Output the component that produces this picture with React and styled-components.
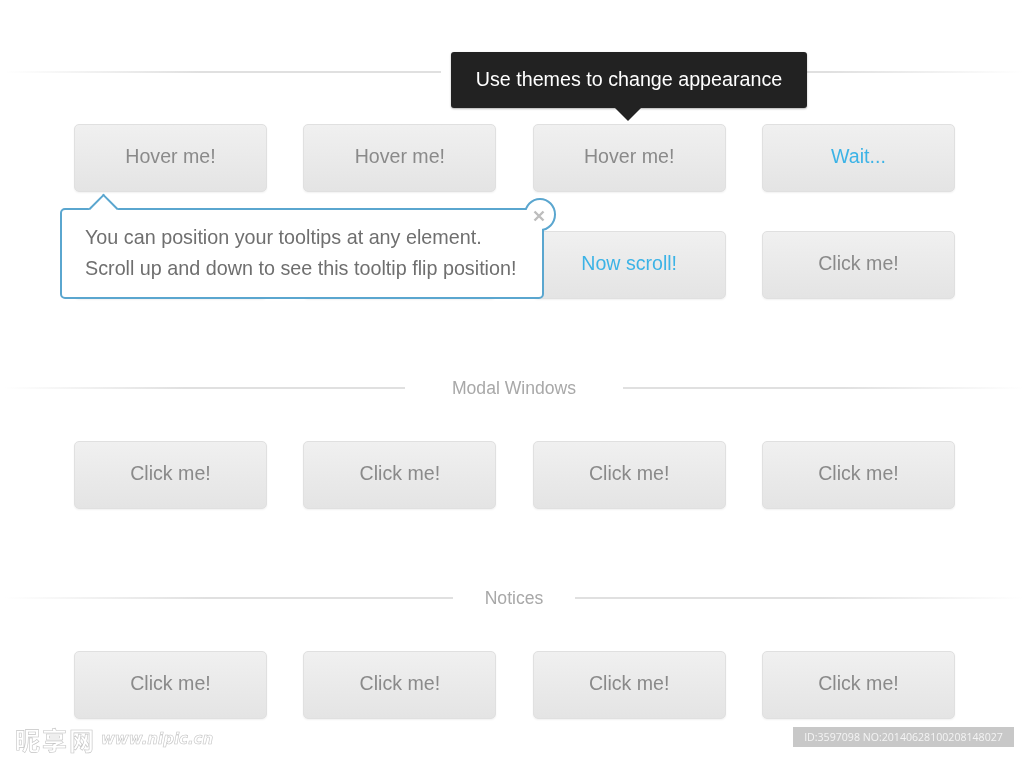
import React from "react";
import styled, { createGlobalStyle } from "styled-components";

const GlobalStyle = createGlobalStyle`
  html, body {
    margin: 0;
    padding: 0;
    background: #fff;
  }
  body {
    font-family: "Liberation Sans", Arial, sans-serif;
  }
`;

const Page = styled.div`
  position: relative;
  width: 1024px;
  height: 757px;
  overflow: hidden;
  background: #fff;
  padding-top: 62px;
  box-sizing: border-box;
  filter: blur(0.35px);
`;

const Section = styled.section`
  margin-bottom: 79px;
`;

const Heading = styled.div`
  display: flex;
  align-items: center;
  justify-content: center;
  height: 20px;
  padding-left: 4px;
  margin-bottom: ${(p) => p.$below}px;
`;

const Line = styled.div`
  flex: 1;
  height: 2px;
  background: linear-gradient(
    ${(p) => (p.$side === "left" ? "to right" : "to left")},
    rgba(216, 216, 216, 0) 0%,
    #e0e0e0 45%,
    #e0e0e0 100%
  );
`;

const Title = styled.h2`
  margin: 0;
  width: ${(p) => p.$width}px;
  text-align: center;
  font-size: 17.6px;
  font-weight: 400;
  color: #a8a8a8;
  line-height: 20px;
`;

const ButtonGrid = styled.div`
  display: grid;
  grid-template-columns: repeat(4, 193px);
  column-gap: 36.33px;
  row-gap: 39px;
  padding-left: 74px;
`;

const DemoButton = styled.button`
  height: 68px;
  box-sizing: border-box;
  border: 1px solid #e0e0e0;
  border-radius: 5px;
  background: linear-gradient(to bottom, #f0f0f0, #e4e4e4);
  box-shadow: 0 1px 2px rgba(0, 0, 0, 0.06);
  font-family: inherit;
  font-size: 19.6px;
  color: ${(p) => (p.$active ? "#3cb3e6" : "#8a8a8a")};
  padding: 0 0 3px;
`;

const DarkTip = styled.div`
  position: absolute;
  left: 451px;
  top: 52px;
  width: 356px;
  height: 56px;
  box-sizing: border-box;
  background: #222;
  border-radius: 3px;
  box-shadow: 0 1px 2px rgba(0, 0, 0, 0.3);
  color: #fff;
  font-size: 19.7px;
  line-height: 55px;
  text-align: center;

  &::after {
    content: "";
    position: absolute;
    left: 164px;
    bottom: -13px;
    border-left: 13px solid transparent;
    border-right: 13px solid transparent;
    border-top: 13px solid #222;
  }
`;

const LightTip = styled.div`
  position: absolute;
  left: 60px;
  top: 208px;
  width: 484px;
  height: 91px;
  box-sizing: border-box;
  background: #fff;
  border: 2px solid #5aa6cf;
  border-radius: 5px;
  padding: 12px 0 0 23px;
  color: #6f6f6f;
  font-size: 19.75px;
  line-height: 31px;
  white-space: nowrap;
`;

const TipArrow = styled.span`
  position: absolute;
  left: 31px;
  top: -12px;
  width: 21px;
  height: 21px;
  background: #fff;
  border-left: 2px solid #5aa6cf;
  border-top: 2px solid #5aa6cf;
  box-sizing: border-box;
  transform: rotate(45deg);
`;

const CloseBadge = styled.span`
  position: absolute;
  right: -14px;
  top: -12px;
  width: 32px;
  height: 33px;
  box-sizing: border-box;
  border-radius: 50%;
  background: #fff;
  border: 2px solid #5aa6cf;
`;

// hides the part of the ring that falls inside the tooltip
const CornerPatch = styled.span`
  position: absolute;
  right: 0;
  top: 0;
  width: 20px;
  height: 22px;
  background: #fff;
`;

const CloseIcon = styled.svg`
  position: absolute;
  right: -3px;
  top: 0;
`;

const Watermark = styled.div`
  position: absolute;
  left: 15px;
  top: 725px;
  display: flex;
  align-items: center;
  gap: 5px;
  color: #fff;
  -webkit-text-stroke: 0.6px #c4c4c4;
  white-space: nowrap;
`;

const WatermarkCn = styled.span`
  font-family: "Noto Sans CJK SC", sans-serif;
  font-weight: 700;
  font-size: 25px;
  line-height: 28px;
  letter-spacing: 2px;
`;

const WatermarkUrl = styled.span`
  font-family: "DejaVu Sans", sans-serif;
  font-style: italic;
  font-weight: 700;
  font-size: 15px;
`;

const IdBadge = styled.div`
  position: absolute;
  left: 793px;
  top: 727px;
  width: 221px;
  height: 20px;
  background: #c8c8c8;
  color: #f4f4f4;
  font-family: "Open Sans", sans-serif;
  font-size: 10.6px;
  line-height: 20px;
  text-align: center;
  white-space: nowrap;
`;

// the two empty ones sit under the blue tooltip
const rowOne = [
  { label: "Hover me!" },
  { label: "Hover me!" },
  { label: "Hover me!" },
  { label: "Wait...", active: true },
  { label: "" },
  { label: "" },
  { label: "Now scroll!", active: true },
  { label: "Click me!" },
];

const clickRow = ["Click me!", "Click me!", "Click me!", "Click me!"];

const App = () => {
  return (
    <Page>
      <GlobalStyle />
      <Section>
        <Heading $below={42}>
          <Line $side="left" />
          <Title $width={146} />
          <Line $side="right" />
        </Heading>
        <ButtonGrid>
          {rowOne.map((el, idx) => (
            <DemoButton key={idx} $active={el.active}>
              {el.label}
            </DemoButton>
          ))}
        </ButtonGrid>
      </Section>

      <Section>
        <Heading $below={43}>
          <Line $side="left" />
          <Title $width={218}>Modal Windows</Title>
          <Line $side="right" />
        </Heading>
        <ButtonGrid>
          {clickRow.map((el, idx) => (
            <DemoButton key={idx}>{el}</DemoButton>
          ))}
        </ButtonGrid>
      </Section>

      <Section>
        <Heading $below={43}>
          <Line $side="left" />
          <Title $width={122}>Notices</Title>
          <Line $side="right" />
        </Heading>
        <ButtonGrid>
          {clickRow.map((el, idx) => (
            <DemoButton key={idx}>{el}</DemoButton>
          ))}
        </ButtonGrid>
      </Section>

      <DarkTip>Use themes to change appearance</DarkTip>

      <LightTip>
        <TipArrow />
        <CloseBadge />
        <CornerPatch />
        <CloseIcon width="12" height="12" viewBox="0 0 12 12">
          <path d="M1.5 1.5 L10.5 10.5 M10.5 1.5 L1.5 10.5" stroke="#bdbdbd" strokeWidth="2.4" />
        </CloseIcon>
        You can position your tooltips at any element.
        <br />
        Scroll up and down to see this tooltip flip position!
      </LightTip>

      <Watermark>
        <WatermarkCn>昵享网</WatermarkCn>
        <WatermarkUrl>www.nipic.cn</WatermarkUrl>
      </Watermark>
      <IdBadge>ID:3597098 NO:20140628100208148027</IdBadge>
    </Page>
  );
};

export default App;
